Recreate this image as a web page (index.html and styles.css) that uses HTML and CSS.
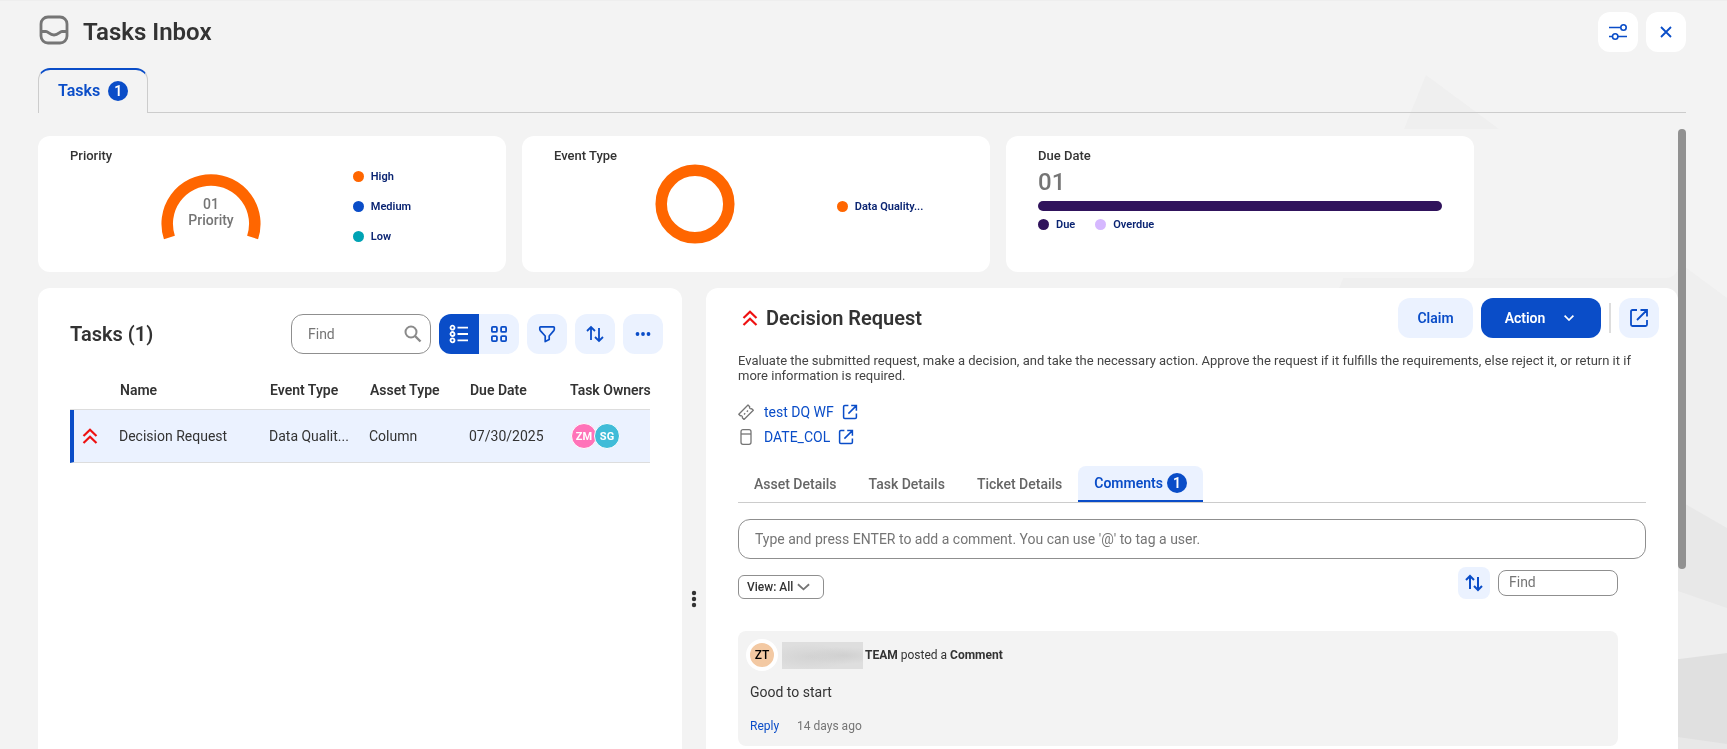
FILE: index.html
```html
<!DOCTYPE html>
<html lang="en">
<head>
    <meta charset="UTF-8">
    <meta name="viewport" content="width=device-width, initial-scale=1.0">
    <title>Tasks Inbox</title>
    <link rel="stylesheet" href="styles.css">
</head>
<body>

    <!-- Background shapes -->
    <svg class="backdrop" viewBox="1327 0 400 749" aria-hidden="true">
        <polygon points="1426,75 1727,298 1727,749 1327,749 1327,318" fill="#efefef"/>
        <polygon points="1600,455 1727,528 1727,749 1600,749" fill="#e8e8e8"/>
        <polygon points="1600,564 1727,608 1727,749 1600,749" fill="#eeeeee"/>
        <polygon points="1600,669 1727,653 1727,749 1600,749" fill="#e0e0e0"/>
        <polygon points="1600,726 1727,744 1727,749 1600,749" fill="#e8e8e8"/>
    </svg>

    <div class="page">
        <header class="page-header">
            <svg class="inbox-icon" viewBox="0 0 30 30" fill="none" stroke="#757575" stroke-width="2.8">
                <rect x="2" y="2" width="26" height="26" rx="7"/>
                <path d="M2 16.5h5c2.500 0 3.500 3.500 8 3.500s5.500-3.500 8-3.500h5"/>
            </svg>
            <h1>Tasks Inbox</h1>
            <div class="header-buttons">
                <button class="icon-button white" aria-label="Settings">
                    <svg width="20" height="20" viewBox="0 0 20 20" fill="none" stroke="currentColor" stroke-width="1.600">
                        <path d="M1 5.500h11.500M1 14.500h3.500M10 14.500h9"/>
                        <circle cx="15.500" cy="5.500" r="2.700"/>
                        <circle cx="7.200" cy="14.500" r="2.700"/>
                    </svg>
                </button>
                <button class="icon-button white" aria-label="Close">
                    <svg width="12" height="12" viewBox="0 0 12 12" fill="none" stroke="currentColor" stroke-width="1.800">
                        <path d="M1 1l10 10M11 1L1 11"/>
                    </svg>
                </button>
            </div>
        </header>

        <nav class="main-tabs">
            <button class="main-tab">Tasks <span class="badge">1</span></button>
        </nav>

        <div class="scroll-area">
            <main class="content">
                <section class="cards">
                    <div class="card">
                        <h3>Priority</h3>
                        <div class="card-body">
                            <svg class="chart" viewBox="0 0 100 84">
                                <path d="M8.400 73.500A43.800 43.800 0 1 1 91.600 73.500" fill="none" stroke="#ff6600" stroke-width="11.500"/>
                                <text x="50" y="45" class="chart-text">01</text>
                                <text x="50" y="61" class="chart-text">Priority</text>
                            </svg>
                            <ul class="legend">
                                <li><span class="dot orange"></span>High</li>
                                <li><span class="dot blue"></span>Medium</li>
                                <li><span class="dot teal"></span>Low</li>
                            </ul>
                        </div>
                    </div>
                    <div class="card">
                        <h3>Event Type</h3>
                        <div class="card-body">
                            <svg class="chart" viewBox="0 0 100 84">
                                <circle cx="50" cy="40" r="33.800" fill="none" stroke="#ff6600" stroke-width="11.500"/>
                            </svg>
                            <ul class="legend">
                                <li><span class="dot orange"></span>Data Quality...</li>
                            </ul>
                        </div>
                    </div>
                    <div class="card">
                        <h3>Due Date</h3>
                        <p class="due-count">01</p>
                        <div class="due-bar"></div>
                        <ul class="legend row">
                            <li><span class="dot purple"></span>Due</li>
                            <li><span class="dot lilac"></span>Overdue</li>
                        </ul>
                    </div>
                </section>

                <div class="panels">
                    <section class="panel tasks-panel">
                        <div class="toolbar">
                            <h2>Tasks (1)</h2>
                            <div class="search">
                                <input type="text" placeholder="Find" aria-label="Find tasks">
                                <svg width="18" height="18" viewBox="0 0 18 18" fill="none" stroke="#8a8a8a" stroke-width="2">
                                    <circle cx="7" cy="7" r="5.500"/>
                                    <path d="M11 11l5.500 5.500" stroke-width="2.400"/>
                                </svg>
                            </div>
                            <div class="view-switch">
                                <button class="icon-button active" aria-label="List view">
                                    <svg width="20" height="20" viewBox="0 0 20 20" fill="none" stroke="currentColor" stroke-width="1.800">
                                        <circle cx="3.500" cy="3.700" r="2"/>
                                        <circle cx="3.500" cy="10" r="2"/>
                                        <circle cx="3.500" cy="16.300" r="2"/>
                                        <path d="M8.500 3.700H19M8.500 10H19M8.500 16.300H19"/>
                                    </svg>
                                </button>
                                <button class="icon-button" aria-label="Grid view">
                                    <svg width="18" height="18" viewBox="0 0 18 18" fill="none" stroke="currentColor" stroke-width="1.800">
                                        <rect x="1.900" y="1.900" width="5" height="5" rx="1"/>
                                        <rect x="11.100" y="1.900" width="5" height="5" rx="1"/>
                                        <rect x="1.900" y="11.100" width="5" height="5" rx="1"/>
                                        <rect x="11.100" y="11.100" width="5" height="5" rx="1"/>
                                    </svg>
                                </button>
                            </div>
                            <button class="icon-button" aria-label="Filter">
                                <svg width="18" height="18" viewBox="0 0 18 18" fill="none" stroke="currentColor" stroke-width="1.700" stroke-linejoin="round">
                                    <path d="M2.500 1.800h13c.5 0 .8.300.8.800v1.700c0 .5-.2.900-.5 1.300L11.200 11v3.600l-4 2V11L2.300 5.600c-.3-.4-.5-.8-.5-1.300V2.600c0-.5.300-.8.700-.8z"/>
                                </svg>
                            </button>
                            <button class="icon-button" aria-label="Sort">
                                <svg width="18" height="18" viewBox="0 0 18 18" fill="none" stroke="currentColor" stroke-width="1.800">
                                    <path d="M5 15V2M1 6l4-4 4 4M13 3v13M9 12l4 4 4-4"/>
                                </svg>
                            </button>
                            <button class="icon-button" aria-label="More">
                                <svg width="16" height="4" viewBox="0 0 16 4" fill="currentColor">
                                    <circle cx="2.500" cy="2" r="1.900"/>
                                    <circle cx="8" cy="2" r="1.900"/>
                                    <circle cx="13.500" cy="2" r="1.900"/>
                                </svg>
                            </button>
                        </div>

                        <table class="task-table">
                            <thead>
                                <tr>
                                    <th class="col-icon"></th>
                                    <th class="col-name">Name</th>
                                    <th class="col-data">Event Type</th>
                                    <th class="col-data">Asset Type</th>
                                    <th class="col-data">Due Date</th>
                                    <th>Task Owners</th>
                                </tr>
                            </thead>
                            <tbody>
                                <tr>
                                    <td class="marker">
                                        <svg width="16" height="16" viewBox="0 0 16 16" fill="none" stroke="#ee1111" stroke-width="2.200">
                                            <path d="M1.500 8L8 1.800 14.500 8M1.500 15L8 8.800 14.500 15"/>
                                        </svg>
                                    </td>
                                    <td>Decision Request</td>
                                    <td>Data Qualit...</td>
                                    <td>Column</td>
                                    <td>07/30/2025</td>
                                    <td>
                                        <div class="owners">
                                            <span class="avatar pink">ZM</span>
                                            <span class="avatar cyan">SG</span>
                                        </div>
                                    </td>
                                </tr>
                            </tbody>
                        </table>
                    </section>

                    <div class="splitter">
                        <svg width="6" height="18" viewBox="0 0 6 18" fill="#333333">
                            <circle cx="3" cy="3" r="2.200"/>
                            <circle cx="3" cy="9" r="2.200"/>
                            <circle cx="3" cy="15" r="2.200"/>
                        </svg>
                    </div>

                    <section class="panel detail-panel">
                        <div class="detail-header">
                            <svg width="16" height="16" viewBox="0 0 16 16" fill="none" stroke="#ee1111" stroke-width="2.200">
                                <path d="M1.500 8L8 1.800 14.500 8M1.500 15L8 8.800 14.500 15"/>
                            </svg>
                            <h2>Decision Request</h2>
                            <button class="claim-button">Claim</button>
                            <button class="action-button">Action
                                <svg width="10" height="6" viewBox="0 0 10 6" fill="none" stroke="currentColor" stroke-width="1.700">
                                    <path d="M.6.6L5 5 9.400.6"/>
                                </svg>
                            </button>
                            <span class="divider"></span>
                            <button class="icon-button" aria-label="Open in new window">
                                <svg width="20" height="20" viewBox="0 0 20 20" fill="none" stroke="currentColor" stroke-width="1.800">
                                    <path d="M8 2H3.500C2.500 2 2 2.500 2 3.500v13c0 1 .5 1.500 1.500 1.500h13c1 0 1.500-.5 1.500-1.500V12M8 12L18 2M11.500 2H18v6.500"/>
                                </svg>
                            </button>
                        </div>

                        <div class="detail-body">
                            <p class="description">Evaluate the submitted request, make a decision, and take the necessary action. Approve the request if it fulfills the requirements, else reject it, or return it if more information is required.</p>

                            <div class="links">
                                <a href="#" class="asset-link">
                                    <svg width="16" height="16" viewBox="0 0 16 16" fill="none" stroke="#757575" stroke-width="1.300" stroke-linejoin="round">
                                        <path d="M.8 10.200L10 1l1.700 1.700a1.500 1.500 0 0 0 2 2L15.300 6.300 6 15.500l-1.700-1.700a1.500 1.500 0 0 0-2-2zM6 10.500l1.200-1.200M8.800 7.700L10 6.500"/>
                                    </svg>
                                    <span>test DQ WF</span>
                                    <svg width="16" height="16" viewBox="0 0 20 20" fill="none" stroke="currentColor" stroke-width="1.900">
                                        <path d="M8 2H3.500C2.500 2 2 2.500 2 3.500v13c0 1 .5 1.500 1.500 1.500h13c1 0 1.500-.5 1.500-1.500V12M8 12L18 2M11.500 2H18v6.500"/>
                                    </svg>
                                </a>
                                <a href="#" class="asset-link">
                                    <svg width="16" height="16" viewBox="0 0 16 16" fill="none" stroke="#757575" stroke-width="1.300">
                                        <rect x="3" y=".7" width="10" height="14.600" rx="2"/>
                                        <path d="M3 5h10"/>
                                    </svg>
                                    <span>DATE_COL</span>
                                    <svg width="16" height="16" viewBox="0 0 20 20" fill="none" stroke="currentColor" stroke-width="1.900">
                                        <path d="M8 2H3.500C2.500 2 2 2.500 2 3.500v13c0 1 .5 1.500 1.500 1.500h13c1 0 1.500-.5 1.500-1.500V12M8 12L18 2M11.500 2H18v6.500"/>
                                    </svg>
                                </a>
                            </div>

                            <nav class="detail-tabs">
                                <button class="detail-tab">Asset Details</button>
                                <button class="detail-tab">Task Details</button>
                                <button class="detail-tab">Ticket Details</button>
                                <button class="detail-tab active">Comments <span class="badge">1</span></button>
                            </nav>

                            <input type="text" class="comment-input" aria-label="Add a comment" placeholder="Type and press ENTER to add a comment. You can use '@' to tag a user.">

                            <div class="comment-tools">
                                <select class="view-select" aria-label="View comments">
                                    <option>View: All</option>
                                </select>
                                <button class="icon-button small" aria-label="Sort comments">
                                    <svg width="18" height="18" viewBox="0 0 18 18" fill="none" stroke="currentColor" stroke-width="2">
                                        <path d="M5 15V2M1 6l4-4 4 4M13 3v13M9 12l4 4 4-4"/>
                                    </svg>
                                </button>
                                <input type="text" class="comment-find" placeholder="Find" aria-label="Find comments">
                            </div>

                            <article class="comment">
                                <div class="comment-author">
                                    <span class="author-avatar">ZT</span>
                                    <span class="hidden-name"></span>
                                    <p><b>TEAM</b> posted a <b>Comment</b></p>
                                </div>
                                <p class="comment-text">Good to start</p>
                                <div class="comment-footer">
                                    <a href="#">Reply</a>
                                    <span>14 days ago</span>
                                </div>
                            </article>
                        </div>
                    </section>
                </div>
            </main>
            <div class="scrollbar"><div class="scroll-thumb"></div></div>
        </div>
    </div>

</body>
</html>
```
FILE: styles.css
```css
* {
    box-sizing: border-box;
}

body {
    font-family: Roboto, "Liberation Sans", sans-serif;
    font-size: 14px;
    background-color: #f3f3f3;
    color: #333333;
    margin: 0;
    height: 100vh;
    overflow: hidden;
}

h1, h2, h3, p, ul {
    margin: 0;
    padding: 0;
}

button, input, select {
    font-family: inherit;
    font-size: 14px;
}

button {
    border: none;
    padding: 0;
    cursor: pointer;
}

svg {
    flex-shrink: 0;
}

a {
    color: #0a4dc8;
    text-decoration: none;
}

input::placeholder {
    color: #757575;
    opacity: 1;
}

.backdrop {
    position: fixed;
    top: 0;
    right: 0;
    width: 400px;
    z-index: -1;
}

.page {
    display: flex;
    flex-direction: column;
    height: 100vh;
    padding: 11px 41px 0 38px;
    border-top: 1px solid #eeeeee;
}

/* Header */
.page-header {
    display: flex;
    align-items: center;
    height: 40px;
}

.inbox-icon {
    width: 30px;
    height: 30px;
    margin: 0 14px 4px 1px;
}

h1 {
    font-size: 24px;
    font-weight: 600;
}

.header-buttons {
    display: flex;
    gap: 8px;
    margin-left: auto;
}

.icon-button {
    display: flex;
    align-items: center;
    justify-content: center;
    width: 40px;
    height: 40px;
    border-radius: 12px;
    background-color: #ebf2ff;
    color: #0a4dc8;
}

.icon-button.white {
    background-color: white;
}

.icon-button.small {
    width: 32px;
    height: 32px;
    border-radius: 8px;
}

.badge {
    display: flex;
    align-items: center;
    justify-content: center;
    width: 20px;
    height: 20px;
    border-radius: 50%;
    background-color: #0a4dc8;
    color: white;
    font-size: 14px;
    font-weight: 600;
}

/* Main tabs */
.main-tabs {
    display: flex;
    margin-top: 16px;
    height: 45px;
}

.main-tabs::after {
    content: "";
    flex: 1;
    border-bottom: 1px solid #cccccc;
}

.main-tab {
    display: flex;
    align-items: center;
    gap: 8px;
    padding: 0 19px 2px;
    border: 1px solid #cccccc;
    border-top: 2px solid #0a4dc8;
    border-bottom: none;
    border-radius: 12px 12px 0 0;
    background: none;
    color: #0a4dc8;
    font-size: 16px;
    font-weight: 600;
}

/* Scrolling content */
.scroll-area {
    display: flex;
    flex: 1;
    min-height: 0;
    margin-top: 16px;
}

.content {
    display: flex;
    flex-direction: column;
    flex: 1;
    min-width: 0;
}

.scrollbar {
    width: 8px;
}

.scroll-thumb {
    height: 71%;
    border-radius: 4px;
    background-color: #919191;
}

/* Summary cards */
.cards {
    display: grid;
    grid-template-columns: repeat(3, minmax(0, 468px));
    gap: 16px;
    padding: 7px 0 6px;
    border-radius: 0 0 12px 12px;
    background-color: #f3f3f3;
}

.card {
    height: 136px;
    padding: 12px 32px;
    border-radius: 12px;
    background-color: white;
}

.card h3 {
    font-size: 13px;
    line-height: 16px;
    font-weight: 500;
}

.card-body {
    display: grid;
    grid-template-columns: 7fr 3fr;
    align-items: center;
    height: 84px;
}

.chart {
    width: 100px;
    height: 84px;
    justify-self: center;
}

.chart-text {
    font-size: 14px;
    font-weight: 500;
    text-anchor: middle;
    fill: #757575;
}

.legend {
    display: flex;
    flex-direction: column;
    gap: 17px;
    list-style: none;
    color: #0a2472;
    font-size: 11px;
    line-height: 13px;
    font-weight: 600;
}

.legend.row {
    flex-direction: row;
    gap: 20px;
}

.legend li {
    display: flex;
    align-items: center;
    gap: 7px;
}

.dot {
    width: 11px;
    height: 11px;
    border-radius: 50%;
}

.orange {
    background-color: #ff6600;
}

.blue {
    background-color: #0a4dc8;
}

.teal {
    background-color: #00a3b4;
}

.purple {
    background-color: #30135c;
}

.lilac {
    background-color: #d6b8ff;
}

.due-count {
    color: #757575;
    font-size: 24px;
    line-height: 36px;
    font-weight: 500;
}

.due-bar {
    height: 10px;
    margin: 1px 0 7px;
    border-radius: 5px;
    background-color: #30135c;
}

/* Panels */
.panels {
    display: flex;
    flex: 1;
    min-height: 0;
    padding-top: 10px;
}

.panel {
    border-radius: 12px 12px 0 0;
    background-color: white;
}

.tasks-panel {
    width: calc(40% - 12px);
    padding: 26px 32px 0;
}

.splitter {
    display: flex;
    align-items: flex-start;
    justify-content: center;
    width: 24px;
    padding-top: 302px;
    background-color: #f3f3f3;
}

.detail-panel {
    flex: 1;
    min-width: 0;
}

h2 {
    margin-right: auto;
    font-size: 20px;
    font-weight: 600;
}

.toolbar {
    display: flex;
    align-items: center;
    gap: 8px;
    margin-right: -13px;
}

.search {
    display: flex;
    align-items: center;
    width: 140px;
    height: 40px;
    padding: 0 8px 0 16px;
    border: 1px solid #8f8f8f;
    border-radius: 12px;
}

.search input {
    flex: 1;
    min-width: 0;
    padding: 0;
    border: none;
    background: none;
}

.view-switch {
    display: flex;
    overflow: hidden;
    border-radius: 12px;
}

.view-switch .icon-button {
    border-radius: 0;
}

.icon-button.active {
    background-color: #0a4dc8;
    color: white;
}

.task-table {
    width: 100%;
    margin-top: 18px;
    border-collapse: separate;
    border-spacing: 0;
    table-layout: fixed;
}

.task-table th,
.task-table td {
    padding: 0 0 0 8px;
    border-bottom: 1px solid #dddddd;
    text-align: left;
    white-space: nowrap;
}

.task-table th {
    height: 38px;
    padding-bottom: 2px;
    font-weight: 600;
}

.task-table td {
    height: 53px;
    padding-left: 7px;
    background-color: #ebf2ff;
}

.col-icon {
    width: 42px;
}

.col-name {
    width: 150px;
}

.col-data {
    width: 100px;
}

.task-table .marker {
    padding-left: 8px;
    border-left: 4px solid #0a4dc8;
}

.marker svg {
    display: block;
}

.owners {
    display: flex;
    padding-left: 2px;
}

.avatar {
    display: flex;
    align-items: center;
    justify-content: center;
    width: 26px;
    height: 26px;
    border: 1px solid white;
    border-radius: 50%;
    color: white;
    font-size: 11px;
    font-weight: 700;
}

.avatar + .avatar {
    margin-left: -3px;
}

.pink {
    background-color: #ff73b9;
}

.cyan {
    background-color: #40bcd8;
}

/* Task details */
.detail-header {
    display: flex;
    align-items: center;
    gap: 8px;
    padding: 10px 19px 0 36px;
}

.claim-button,
.action-button {
    display: flex;
    align-items: center;
    justify-content: center;
    height: 40px;
    border-radius: 12px;
    font-weight: 600;
}

.claim-button {
    width: 75px;
    background-color: #ebf2ff;
    color: #0a4dc8;
}

.action-button {
    width: 120px;
    gap: 19px;
    padding-right: 3px;
    background-color: #0a4dc8;
    color: white;
}

.divider {
    width: 2px;
    height: 30px;
    background-color: #dddddd;
}

.detail-body {
    padding: 15px 32px 0;
}

.description {
    color: #444444;
    font-size: 13px;
    line-height: 15px;
}

.links {
    display: flex;
    flex-direction: column;
    align-items: flex-start;
    gap: 9px;
    margin: 21px 0;
}

.asset-link {
    display: flex;
    align-items: center;
    gap: 8px;
    line-height: 16px;
}

.asset-link span {
    margin-left: 2px;
}

.detail-tabs {
    display: flex;
    height: 37px;
    border-bottom: 1px solid #cccccc;
}

.detail-tab {
    display: flex;
    align-items: center;
    gap: 4px;
    padding: 0 16px;
    background: none;
    color: #666666;
    font-weight: 500;
}

.detail-tab.active {
    border-bottom: 2px solid #0a4dc8;
    border-radius: 8px 8px 0 0;
    background-color: #ebf2ff;
    color: #0a4dc8;
    font-weight: 600;
}

.comment-input {
    display: block;
    width: 100%;
    height: 40px;
    margin-top: 16px;
    padding: 0 16px;
    border: 1px solid #8f8f8f;
    border-radius: 12px;
}

.comment-tools {
    display: flex;
    align-items: center;
    gap: 8px;
    margin: 8px 28px 32px 0;
}

.view-select {
    width: 86px;
    height: 24px;
    margin: 8px auto 0 0;
    padding: 0 8px;
    appearance: none;
    border: 1px solid #8f8f8f;
    border-radius: 6px;
    background: white url("data:image/svg+xml,%3Csvg xmlns='http://www.w3.org/2000/svg' viewBox='0 0 14 8' fill='none' stroke='%23757575' stroke-width='2'%3E%3Cpath d='M1 1l6 5.500L13 1'/%3E%3C/svg%3E") no-repeat right 13px center / 13px 8px;
    color: #333333;
    font-size: 12px;
    font-weight: 500;
}

.comment-find {
    width: 120px;
    height: 26px;
    padding: 0 10px 2px;
    border: 1px solid #8f8f8f;
    border-radius: 8px;
}

.comment {
    margin-right: 28px;
    padding: 8px 8px 12px;
    border-radius: 8px;
    background-color: #f3f3f3;
}

.comment-author {
    display: flex;
    align-items: center;
    font-size: 12px;
}

.author-avatar {
    display: flex;
    align-items: center;
    justify-content: center;
    width: 32px;
    height: 32px;
    border: 4px solid white;
    border-radius: 50%;
    background-color: #f3c9a3;
    color: black;
    font-weight: 500;
}

.hidden-name {
    width: 81px;
    height: 27px;
    margin: 0 2px 0 4px;
    background: radial-gradient(ellipse at 75% 50%, #d0d0d0, transparent 45%), radial-gradient(ellipse at 35% 55%, #d3d3d3, #dedede 60%);
}

.comment-text {
    margin: 13px 4px 18px;
    line-height: 16px;
}

.comment-footer {
    display: flex;
    gap: 18px;
    margin-left: 4px;
    color: #757575;
    font-size: 12px;
    line-height: 16px;
}
```
